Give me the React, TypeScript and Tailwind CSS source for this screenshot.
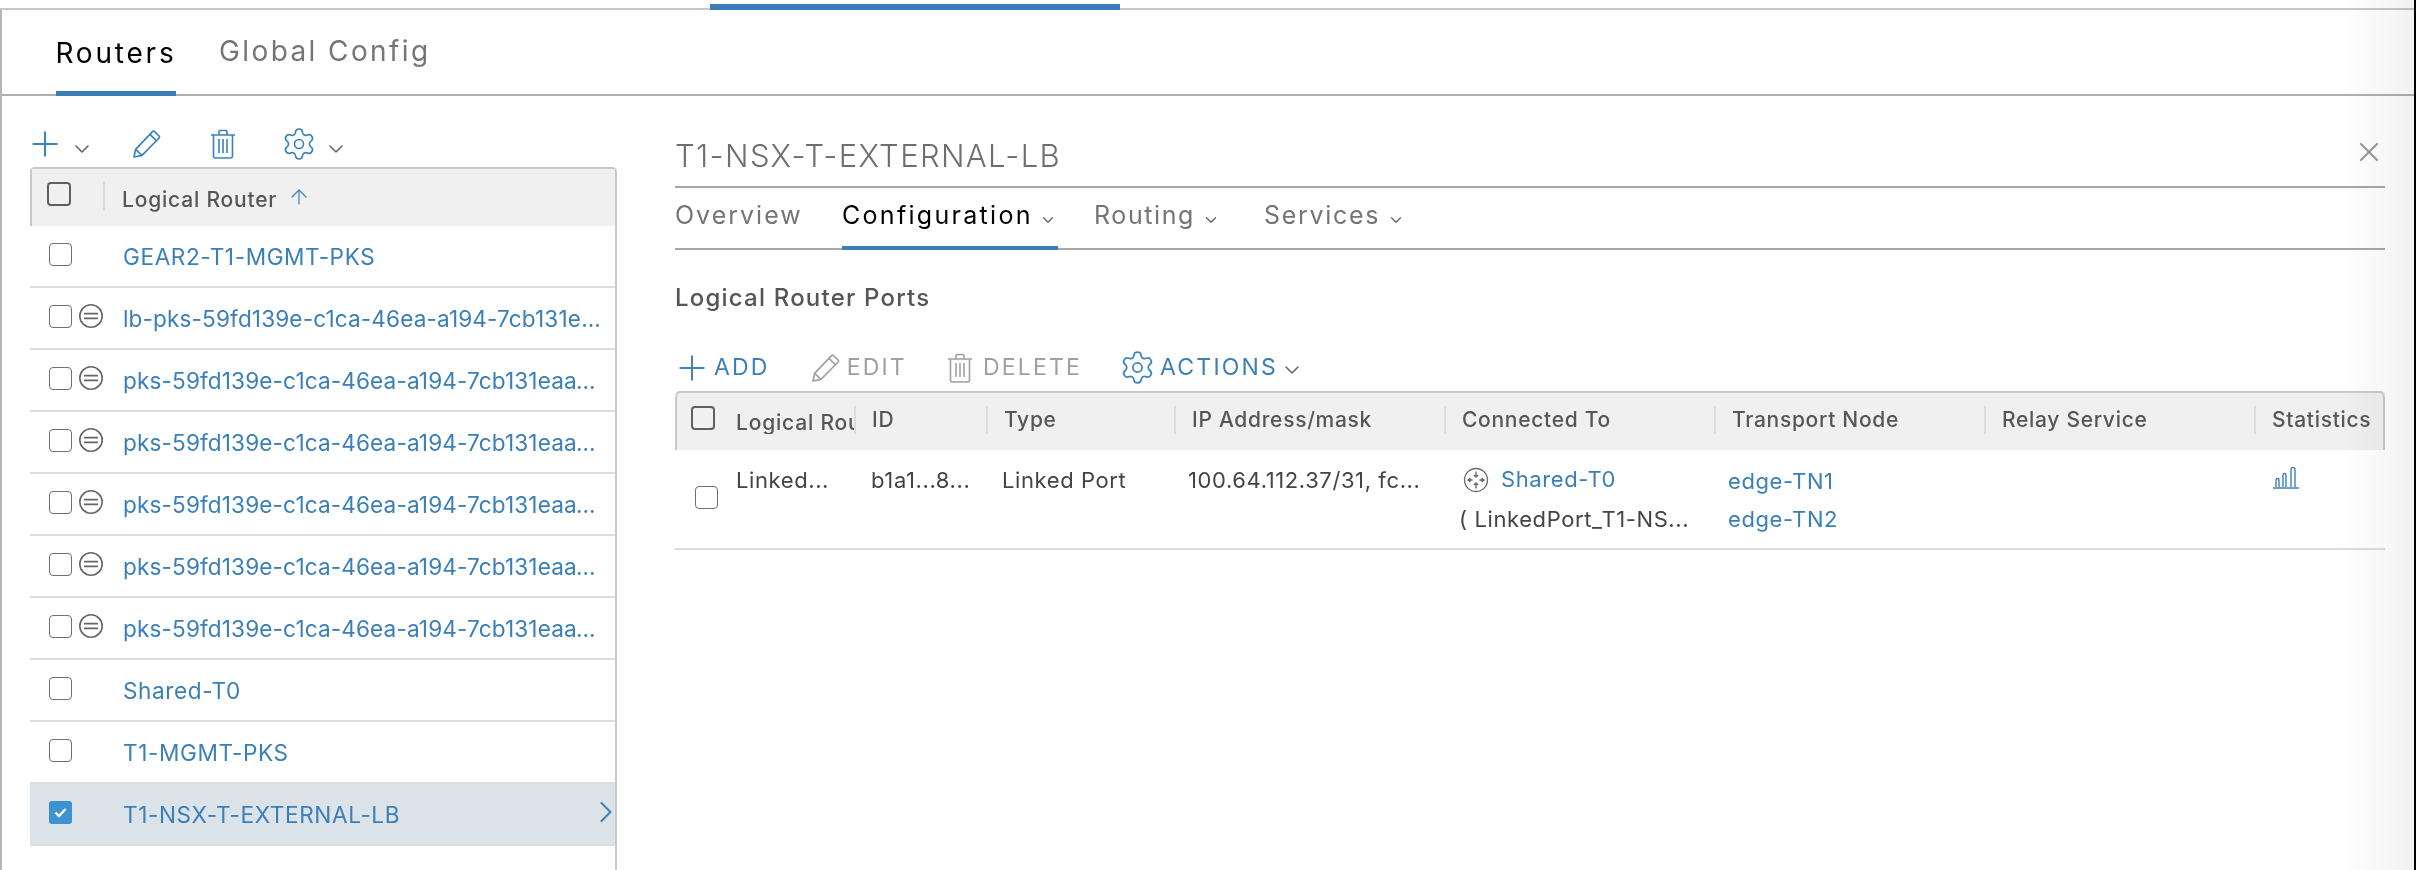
import { ChevronDown, ChevronRight, Plus, Settings, X, ArrowUp } from "lucide-react";

const rows = [
  { name: "GEAR2-T1-MGMT-PKS" },
  { name: "lb-pks-59fd139e-c1ca-46ea-a194-7cb131eaa1d5", minus: true },
  { name: "pks-59fd139e-c1ca-46ea-a194-7cb131eaa1d5-a", minus: true },
  { name: "pks-59fd139e-c1ca-46ea-a194-7cb131eaa1d5-b", minus: true },
  { name: "pks-59fd139e-c1ca-46ea-a194-7cb131eaa1d5-c", minus: true },
  { name: "pks-59fd139e-c1ca-46ea-a194-7cb131eaa1d5-d", minus: true },
  { name: "pks-59fd139e-c1ca-46ea-a194-7cb131eaa1d5-e", minus: true },
  { name: "Shared-T0" },
  { name: "T1-MGMT-PKS" },
  { name: "T1-NSX-T-EXTERNAL-LB", selected: true },
];

function Box({ checked, heavy }: { checked?: boolean; heavy?: boolean }) {
  if (checked) {
    return (
      <span className="flex h-[23px] w-[23px] shrink-0 items-center justify-center rounded-[3px] bg-[#3d93cf]">
        <svg width="15" height="15" viewBox="0 0 15 15" fill="none" stroke="white" strokeWidth="2.4">
          <path d="M2.5 7.5 6 11l6.5-7" />
        </svg>
      </span>
    );
  }
  return (
    <span
      className={
        heavy
          ? "block h-[24px] w-[24px] shrink-0 rounded-[4px] border-2 border-[#5f5f5f]"
          : "block h-[23px] w-[23px] shrink-0 rounded-[4px] border-[1.5px] border-[#6f6f6f]"
      }
    />
  );
}

function PencilIcon({ className }: { className: string }) {
  return (
    <svg width="30" height="30" viewBox="0 0 30 30" fill="none" stroke="currentColor" strokeWidth="1.7" strokeLinejoin="round" className={`shrink-0 ${className}`}>
      <path d="M2 28l1.6-7.6L20.5 2.6a1.4 1.4 0 0 1 2 0l4.6 4.4a1.4 1.4 0 0 1 0 2L10 26.4z" />
      <path d="M18 5.4l6.6 6.4M3.6 20.4 10 26.4" />
    </svg>
  );
}

function TrashIcon({ className }: { className: string }) {
  return (
    <svg width="26" height="30" viewBox="0 0 26 30" fill="none" stroke="currentColor" strokeWidth="1.6" className={`shrink-0 ${className}`}>
      <path d="M1 6h24M9 6V2.5a1 1 0 0 1 1-1h6a1 1 0 0 1 1 1V6" />
      <path d="M3.5 6v21a2 2 0 0 0 2 2h15a2 2 0 0 0 2-2V6" />
      <path d="M9 10v14M13 10v14M17 10v14" />
    </svg>
  );
}

function MinusIcon() {
  return (
    <svg width="26" height="26" viewBox="0 0 26 26" fill="none" stroke="#666" className="shrink-0">
      <circle cx="13" cy="13" r="11.2" strokeWidth="1.6" />
      <path d="M6 10.7h14M6 15.3h14" strokeWidth="1.8" />
    </svg>
  );
}

function RouterIcon() {
  return (
    <svg width="26" height="26" viewBox="0 0 26 26" fill="none" stroke="#666" strokeWidth="1.3" className="shrink-0">
      <circle cx="13" cy="13" r="11.5" />
      <path d="M13 4.5v5.5M10.8 8l2.2 2.2L15.2 8M13 21.5V16M10.8 18l2.2-2.2 2.2 2.2M4.5 13h5M7.6 10.9 5 13l2.6 2.1M21.5 13h-5M18.4 10.9 21 13l-2.6 2.1" />
    </svg>
  );
}

function StatsIcon() {
  return (
    <svg width="26" height="22" viewBox="0 0 26 22" fill="none" stroke="#3b82bd" strokeWidth="1.4">
      <path d="M0 21h26M3 20v-7a1.5 1.5 0 0 1 3 0v7M10 20V8a1.5 1.5 0 0 1 3 0v12M18 20V2.5a2 2 0 0 1 4 0V20" />
    </svg>
  );
}

function Th({ w, label }: { w: string; label: string }) {
  return (
    <div className={`${w} flex h-[28px] shrink-0 items-center border-l-2 border-[#dcdcdc] pl-[16px]`}>
      <span className="whitespace-nowrap text-[21px] font-medium tracking-[0.7px] text-[#565656]">{label}</span>
    </div>
  );
}

export default function App() {
  return (
    <div className="relative h-[870px] w-[2416px] overflow-hidden bg-white font-['Inter','Liberation_Sans',sans-serif]">
      {/* top strip */}
      <div className="h-[10px] border-b-2 border-[#c8c8c8] pt-[4px]">
        <div className="ml-[710px] h-[6px] w-[410px] bg-[#3b7db8]" />
      </div>

      <div className="h-[860px] border-l-2 border-[#b5b5b5]">
        {/* main tabs */}
        <div className="flex h-[86px] items-end gap-[43px] border-b-2 border-[#b0b0b0] pl-[54px]">
          <div className="-mb-[2px] flex h-[66px] w-[120px] justify-center whitespace-nowrap border-b-[5px] border-[#3b7db8] pt-[2px] text-[28px] tracking-[2.8px] text-black">
            Routers
          </div>
          <div className="flex h-[66px] pt-[2px] text-[28px] tracking-[2.4px] text-[#757575]">Global Config</div>
        </div>

        <div className="flex">
          {/* router list */}
          <div className="ml-[28px] w-[587px] shrink-0">
            <div className="flex h-[71px] items-center pt-[24px]">
              <Plus size={40} strokeWidth={1.2} className="-ml-[5px] shrink-0 text-[#3b82bd]" />
              <ChevronDown size={24} strokeWidth={1.6} className="ml-[5px] mt-[10px] shrink-0 text-[#666]" />
              <PencilIcon className="ml-[38px] text-[#3b82bd]" />
              <TrashIcon className="ml-[48px] text-[#3b82bd]" />
              <Settings size={36} strokeWidth={1.1} className="ml-[45px] shrink-0 text-[#3b82bd]" />
              <ChevronDown size={24} strokeWidth={1.6} className="ml-[7px] mt-[10px] shrink-0 text-[#666]" />
            </div>
            <div className="h-[800px] rounded-t-[5px] border-r-2 border-t-2 border-[#c8c8c8]">
              <div className="flex h-[57px] items-start border-l-2 border-[#c8c8c8] bg-[#f0f0f0] pl-[15px] pt-[13px]">
                <Box heavy />
                <div className="ml-[32px] h-[28px] border-l-2 border-[#dcdcdc]" />
                <span className="ml-[17px] mt-[2px] whitespace-nowrap text-[21px] font-medium tracking-[0.8px] text-[#565656]">Logical Router</span>
                <ArrowUp size={24} strokeWidth={1.2} className="ml-[10px] mt-[3px] text-[#3b82bd]" />
              </div>
              {rows.map((r) => (
                <div
                  key={r.name}
                  className={`relative flex h-[62px] items-center border-b-2 border-[#dddddd] ${r.selected ? "bg-[#dbe3e9]" : ""}`}
                >
                  <div className="-mt-[4px] flex w-[93px] shrink-0 items-center gap-[6px] pl-[19px]">
                    <Box checked={r.selected} />
                    {r.minus && <MinusIcon />}
                  </div>
                  <span className={`w-[478px] truncate pt-[1px] text-[22.6px] text-[#3b7fb8] ${r.minus ? "tracking-[0.12px]" : "tracking-[0.6px]"}`}>
                    {r.name}
                  </span>
                  {r.selected && (
                    <ChevronRight size={36} strokeWidth={1.3} className="absolute right-[-9px] top-[10px] text-[#3b7fb8]" />
                  )}
                </div>
              ))}
            </div>
          </div>

          {/* detail pane */}
          <div className="ml-[58px] w-[1710px] shrink-0">
            <div className="flex h-[92px] items-start justify-between border-b-2 border-[#a8a8a8] pt-[37px]">
              <span className="text-[31px] font-light tracking-[1.35px] text-[#6e6e6e]">T1-NSX-T-EXTERNAL-LB</span>
              <X size={32} strokeWidth={1.6} className="mt-[3px] text-[#9a9a9a]" />
            </div>
            <div className="flex h-[62px] border-b-2 border-[#a8a8a8] text-[25px] tracking-[2px] text-[#757575]">
              <div className="w-[167px] pt-[9px]">Overview</div>
              <div className="-mb-[2px] flex h-[62px] w-[216px] items-start border-b-[4px] border-[#3b7db8] pt-[9px] tracking-[2.3px] text-black">
                Configuration
                <ChevronDown size={18} strokeWidth={1.8} className="ml-[6px] mt-[14px] text-[#666]" />
              </div>
              <div className="ml-[36px] flex w-[170px] items-start pt-[9px] tracking-[1.6px]">
                Routing
                <ChevronDown size={18} strokeWidth={1.8} className="ml-[7px] mt-[14px] text-[#666]" />
              </div>
              <div className="flex items-start pt-[9px] tracking-[1.7px]">
                Services
                <ChevronDown size={18} strokeWidth={1.8} className="ml-[7px] mt-[14px] text-[#666]" />
              </div>
            </div>
            <div className="pt-[32px] text-[24px] font-medium leading-[32px] tracking-[1.2px] text-[#555]">Logical Router Ports</div>

            <div className="mt-[30px] flex h-[47px] items-center text-[23px] tracking-[2.2px]">
              <Plus size={40} strokeWidth={1.2} className="-ml-[3px] shrink-0 text-[#3b82bd]" />
              <span className="ml-[2px] text-[#3b7fb8]">ADD</span>
              <PencilIcon className="ml-[41px] text-[#a0a0a0]" />
              <span className="ml-[6px] text-[#a0a0a0]">EDIT</span>
              <TrashIcon className="ml-[40px] text-[#a0a0a0]" />
              <span className="ml-[10px] text-[#a0a0a0]">DELETE</span>
              <Settings size={37} strokeWidth={1.1} className="ml-[37px] shrink-0 text-[#3b82bd]" />
              <span className="ml-[4px] text-[#3b7fb8]">ACTIONS</span>
              <ChevronDown size={24} strokeWidth={1.6} className="ml-[2px] mt-[4px] shrink-0 text-[#666]" />
            </div>

            {/* ports table */}
            <div className="rounded-t-[5px] border-t-2 border-[#c8c8c8]">
              <div className="flex h-[57px] items-start rounded-t-[5px] border-x-2 border-[#c8c8c8] bg-[#f0f0f0] pt-[13px]">
                <div className="ml-[14px] w-[45px] shrink-0">
                  <Box heavy />
                </div>
                <div className="h-[28px] w-[118px] shrink-0 overflow-hidden whitespace-nowrap pt-[1px] text-[21px] font-medium tracking-[0.8px] text-[#565656]">
                  Logical Router Ports
                </div>
                <Th w="w-[132px]" label="ID" />
                <Th w="w-[188px]" label="Type" />
                <Th w="w-[270px]" label="IP Address/mask" />
                <Th w="w-[270px]" label="Connected To" />
                <Th w="w-[270px]" label="Transport Node" />
                <Th w="w-[270px]" label="Relay Service" />
                <Th w="w-[129px]" label="Statistics" />
              </div>
              <div className="flex h-[100px] border-b-2 border-[#dddddd] text-[22px] tracking-[0.6px] text-[#444]">
                <div className="ml-[20px] w-[41px] shrink-0 pt-[36px]">
                  <Box />
                </div>
                <div className="w-[135px] shrink-0 pt-[14px]">Linked...</div>
                <div className="w-[131px] shrink-0 pt-[14px]">b1a1...8...</div>
                <div className="w-[186px] shrink-0 pt-[14px]">Linked Port</div>
                <div className="w-[271px] shrink-0 pt-[14px]">100.64.112.37/31, fc...</div>
                <div className="w-[269px] shrink-0 pt-[13px]">
                  <div className="ml-[4px] flex items-center gap-[12px] text-[#3b7fb8]">
                    <RouterIcon />
                    Shared-T0
                  </div>
                  <div className="mt-[7px] whitespace-nowrap">( LinkedPort_T1-NS...</div>
                </div>
                <div className="w-[545px] shrink-0 pt-[12px] leading-[38px] text-[#3b7fb8]">
                  <div>edge-TN1</div>
                  <div>edge-TN2</div>
                </div>
                <div className="pt-[17px]">
                  <StatsIcon />
                </div>
              </div>
            </div>
          </div>
        </div>
      </div>

      {/* window edge shading on the right */}
      <div className="absolute bottom-0 right-[2px] top-0 w-[74px] bg-gradient-to-r from-white to-[#f2f2f2] mix-blend-multiply" />
      <div className="absolute bottom-0 right-0 top-0 w-[2px] bg-black" />
    </div>
  );
}
